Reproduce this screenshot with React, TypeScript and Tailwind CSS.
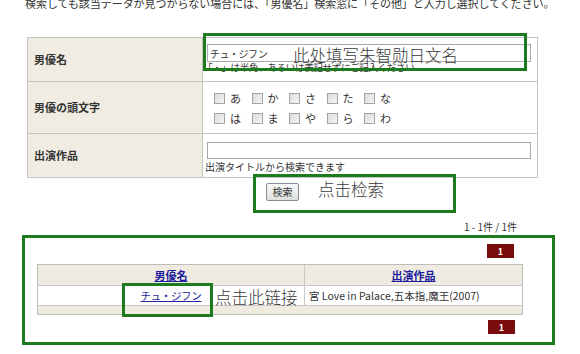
const jp = { fontFamily: '"Noto Sans CJK JP", "Liberation Sans", sans-serif' }

const kana1 = ["あ", "か", "さ", "た", "な"]
const kana2 = ["は", "ま", "や", "ら", "わ"]

function KanaRow({ items }: { items: string[] }) {
	return (
		<div className="flex h-[20px] items-center">
			{items.map((k) => (
				<label key={k} className="flex w-[37.5px] items-center">
					<span className="h-[11px] w-[11px] border border-[#a4a4a4] bg-gradient-to-br from-[#dcdcdc] to-[#f4f4f4]" />
					<span className="ml-[5px] text-[11px] leading-none text-[#333]">{k}</span>
				</label>
			))}
		</div>
	)
}

function Badge() {
	return (
		<div className="flex h-[14px] w-[27px] items-center justify-center bg-[#7a0b0b] text-[9px] font-bold leading-none text-white">
			1
		</div>
	)
}

export default function App() {
	return (
		<div
			className="relative flex h-[354px] w-[580px] flex-col overflow-hidden bg-white text-[#333]"
			style={jp}
		>
			<div className="-mt-[4px] h-[14px] whitespace-nowrap pl-[25px] text-[11px] leading-[14px] tracking-[-0.05px]">
				検索しても該当データが見つからない場合には、「男優名」検索窓に「その他」と入力し選択してください。
			</div>

			{/* search form */}
			<div className="ml-[27px] mt-[27px] w-[511px] border border-[#c4c4c4]">
				<div className="flex h-[44px] border-b border-[#c4c4c4]">
					<div className="flex w-[175px] items-center border-r border-[#c4c4c4] bg-[#f0ece2] pl-[6px] text-[11px] font-bold">
						男優名
					</div>
					<div className="flex-1 pl-[4px] pt-[6px]">
						<div className="flex h-[18px] w-[324px] items-center border border-[#a8a8a8] pl-[2px] text-[10px] tracking-[-0.5px]">
							チュ・ジフン
						</div>
						<div className="-ml-[4px] text-[9.5px] leading-[11px] tracking-[-0.3px]">
							「・」は半角、あるいは表記せずにご記入ください
						</div>
					</div>
				</div>
				<div className="flex h-[52px] border-b border-[#c4c4c4]">
					<div className="flex w-[175px] items-center border-r border-[#c4c4c4] bg-[#f0ece2] pl-[6px] text-[11px] font-bold">
						男優の頭文字
					</div>
					<div className="flex-1 pl-[11px] pt-[6px]">
						<KanaRow items={kana1} />
						<KanaRow items={kana2} />
					</div>
				</div>
				<div className="flex h-[43px]">
					<div className="flex w-[175px] items-center border-r border-[#c4c4c4] bg-[#f0ece2] pl-[6px] text-[11px] font-bold">
						出演作品
					</div>
					<div className="flex-1 pl-[4px] pt-[8px]">
						<div className="h-[17px] w-[324px] border border-[#a8a8a8]" />
						<div className="-ml-[2px] mt-[2px] text-[10px] leading-[12px]">
							出演タイトルから検索できます
						</div>
					</div>
				</div>
			</div>

			<div className="ml-[27px] mt-[5px] flex w-[511px] justify-center">
				<button className="flex h-[18px] w-[33px] items-center justify-center rounded-[2px] border border-[#8c8c8c] bg-gradient-to-b from-[#fafafa] to-[#dedede] text-[10px] leading-none">
					検索
				</button>
			</div>

			<div className="mt-[20px] pr-[63px] text-right text-[10px] leading-[12px]">1 - 1件 / 1件</div>

			{/* results */}
			<div className="mt-[11px] flex justify-end pr-[66px]">
				<Badge />
			</div>
			<div className="ml-[37px] mt-[6px] w-[486px] border border-[#bdbdbd] text-[10.5px]">
				<div className="flex h-[21px] border-b border-[#c8c8c8] bg-[#efebe0] text-[11px]">
					<div className="flex w-[267px] items-center justify-center border-r border-[#c8c8c8] font-bold text-[#1c1c9e] underline">
						男優名
					</div>
					<div className="flex flex-1 items-center justify-center font-bold text-[#1c1c9e] underline">
						出演作品
					</div>
				</div>
				<div className="flex h-[20px] border-b border-[#c8c8c8]">
					<div className="flex w-[267px] items-center justify-center border-r border-[#c8c8c8] text-[#23239c] underline tracking-[-0.4px]">
						チュ・ジフン
					</div>
					<div className="flex flex-1 items-center pl-[4px]">宮 Love in Palace,五本指,魔王(2007)</div>
				</div>
				<div className="h-[8px] bg-[#efebe0]" />
			</div>
			<div className="mt-[5px] flex justify-end pr-[65px]">
				<Badge />
			</div>

			{/* annotations */}
			<div
				className="pointer-events-none absolute left-0 top-0 h-full w-full text-[16.5px] font-light leading-[20px] text-[#3a3a3a]"
				style={{ fontFamily: '"Noto Sans CJK SC", sans-serif' }}
			>
				<div className="absolute left-[203px] top-[33px] h-[38px] w-[324px] border-[3px] border-[#1d7a1d]" />
				<div className="absolute left-[293px] top-[45px]">此处填写朱智勋日文名</div>
				<div className="absolute left-[253px] top-[174px] h-[39px] w-[203px] border-[3px] border-[#1d7a1d]" />
				<div className="absolute left-[318px] top-[179px]">点击检索</div>
				<div className="absolute left-[22px] top-[235px] h-[110px] w-[533px] border-[3px] border-[#1d7a1d]" />
				<div className="absolute left-[122px] top-[283px] h-[34px] w-[91px] border-[3px] border-[#1d7a1d]" />
				<div className="absolute left-[215px] top-[287px]">点击此链接</div>
			</div>
		</div>
	)
}
